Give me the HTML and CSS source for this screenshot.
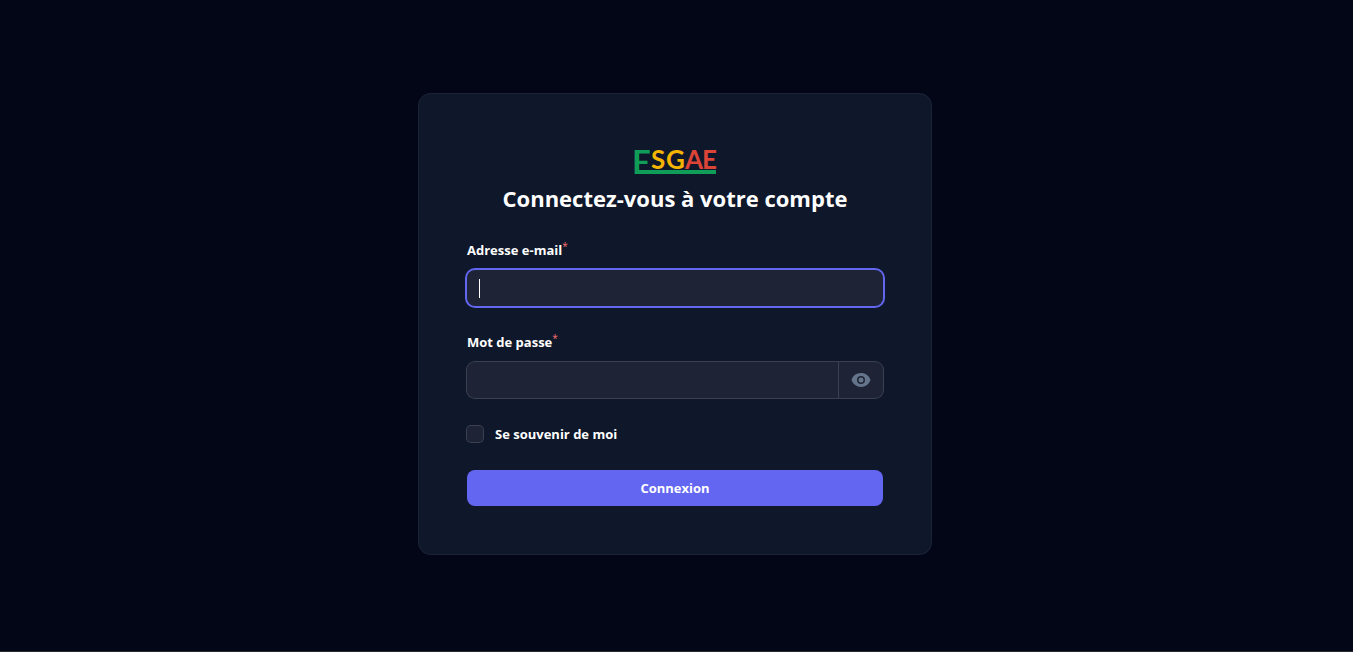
FILE: index.html
```html
<!DOCTYPE html>
<html lang="fr">
<head>
<meta charset="utf-8">
<meta name="viewport" content="width=device-width, initial-scale=1">
<title>Connexion - ESGAE</title>
<link rel="stylesheet" href="styles.css">
</head>
<body>
<main class="page">
  <section class="card">
    <header class="header">
      <svg class="logo" viewBox="0 0 84 40" role="img" aria-label="ESGAE">
        <path class="logo-green" d="M2 28h81v4H2z"/>
        <text class="logo-first" x="-1" y="32">E</text>
        <text class="logo-text" y="27"><tspan class="logo-yellow" x="18">S</tspan><tspan class="logo-yellow" x="33">G</tspan><tspan class="logo-red" x="52">A</tspan><tspan class="logo-red" x="69">E</tspan></text>
      </svg>
      <h1 class="title">Connectez-vous à votre compte</h1>
    </header>
    <form class="form">
      <div class="field">
        <label class="label" for="email">Adresse e-mail<sup class="required">*</sup></label>
        <div class="control control-focused">
          <input class="input" id="email" type="email" required autofocus>
          <span class="caret" aria-hidden="true"></span>
        </div>
      </div>
      <div class="field">
        <label class="label" for="password">Mot de passe<sup class="required">*</sup></label>
        <div class="control">
          <input class="input" id="password" type="password" required>
          <button class="reveal" type="button" aria-label="Afficher le mot de passe">
            <svg class="eye" viewBox="0 0 20 20" aria-hidden="true"><path d="M10 12.5a2.5 2.5 0 1 0 0-5 2.5 2.5 0 0 0 0 5Z"/><path fill-rule="evenodd" d="M.664 10.59a1.651 1.651 0 0 1 0-1.186A10.004 10.004 0 0 1 10 3c4.257 0 7.893 2.66 9.336 6.41.147.381.146.804 0 1.186A10.004 10.004 0 0 1 10 17c-4.257 0-7.893-2.66-9.336-6.41ZM14 10a4 4 0 1 1-8 0 4 4 0 0 1 8 0Z" clip-rule="evenodd"/></svg>
          </button>
        </div>
      </div>
      <label class="remember"><input class="checkbox" type="checkbox">Se souvenir de moi</label>
      <button class="submit" type="submit">Connexion</button>
    </form>
  </section>
</main>
</body>
</html>
```
FILE: styles.css
```css
* { box-sizing: border-box; }
body {
  margin: 0;
  background: #020617;
  color: #fff;
  font-family: "Open Sans", "Noto Sans", sans-serif;
  font-size: 13px;
  font-weight: 700;
  line-height: 24px;
}
.page {
  min-height: 100vh;
  display: flex;
  align-items: center;
  justify-content: center;
  padding: 0 3px 3px 0;
  border-bottom: 1px solid #2b2930;
}
.card {
  width: 100%;
  max-width: 512px;
  padding: 48px;
  border-radius: 12px;
  background: #0f172a;
  box-shadow: 0 0 0 1px #1b2335;
}
.header {
  display: flex;
  flex-direction: column;
  align-items: center;
  margin-bottom: 24px;
}
.logo { width: 84px; height: 40px; overflow: visible; }
.logo-green, .logo-first { fill: #0f9d58; }
.logo-first { font: 700 33px Lato, sans-serif; }
.logo-text { font: 700 26px Lato, sans-serif; }
.logo-yellow { fill: #f4b400; }
.logo-red { fill: #db4437; }
.title {
  margin: 0;
  font-size: 22px;
  font-weight: 700;
  line-height: 32px;
  text-align: center;
}
.form { display: flex; flex-direction: column; gap: 24px; }
.field { display: flex; flex-direction: column; gap: 8px; }
.label { height: 24px; }
.required { color: #f87171; font-size: 10px; line-height: 0; font-weight: 500; }
.control {
  position: relative;
  display: flex;
  height: 36px;
  border-radius: 8px;
  background: #1e2335;
  box-shadow: 0 0 0 1px #3a404f;
}
.control-focused { box-shadow: 0 0 0 2px #6366f1; }
.input {
  flex: 1;
  min-width: 0;
  border: 0;
  outline: 0;
  padding: 6px 12px;
  background: transparent;
  color: #fff;
  caret-color: transparent;
  font: inherit;
  font-weight: 400;
}
.caret {
  position: absolute;
  left: 12px;
  top: 9px;
  width: 1px;
  height: 19px;
  background: #fff;
}
.reveal {
  display: flex;
  align-items: center;
  padding: 0 12px;
  border: 0;
  border-left: 1px solid #3a404f;
  background: transparent;
  color: #64748b;
}
.eye { width: 20px; height: 20px; fill: currentColor; }
.remember { display: flex; align-items: center; gap: 12px; }
.checkbox {
  appearance: none;
  width: 16px;
  height: 16px;
  margin: 0;
  border-radius: 4px;
  background: #1e2335;
  box-shadow: 0 0 0 1px #3a404f;
}
.checkbox:checked { background: #6366f1; }
.submit {
  height: 36px;
  border: 0;
  border-radius: 8px;
  background: #6366f1;
  color: #fff;
  font: inherit;
}
```
